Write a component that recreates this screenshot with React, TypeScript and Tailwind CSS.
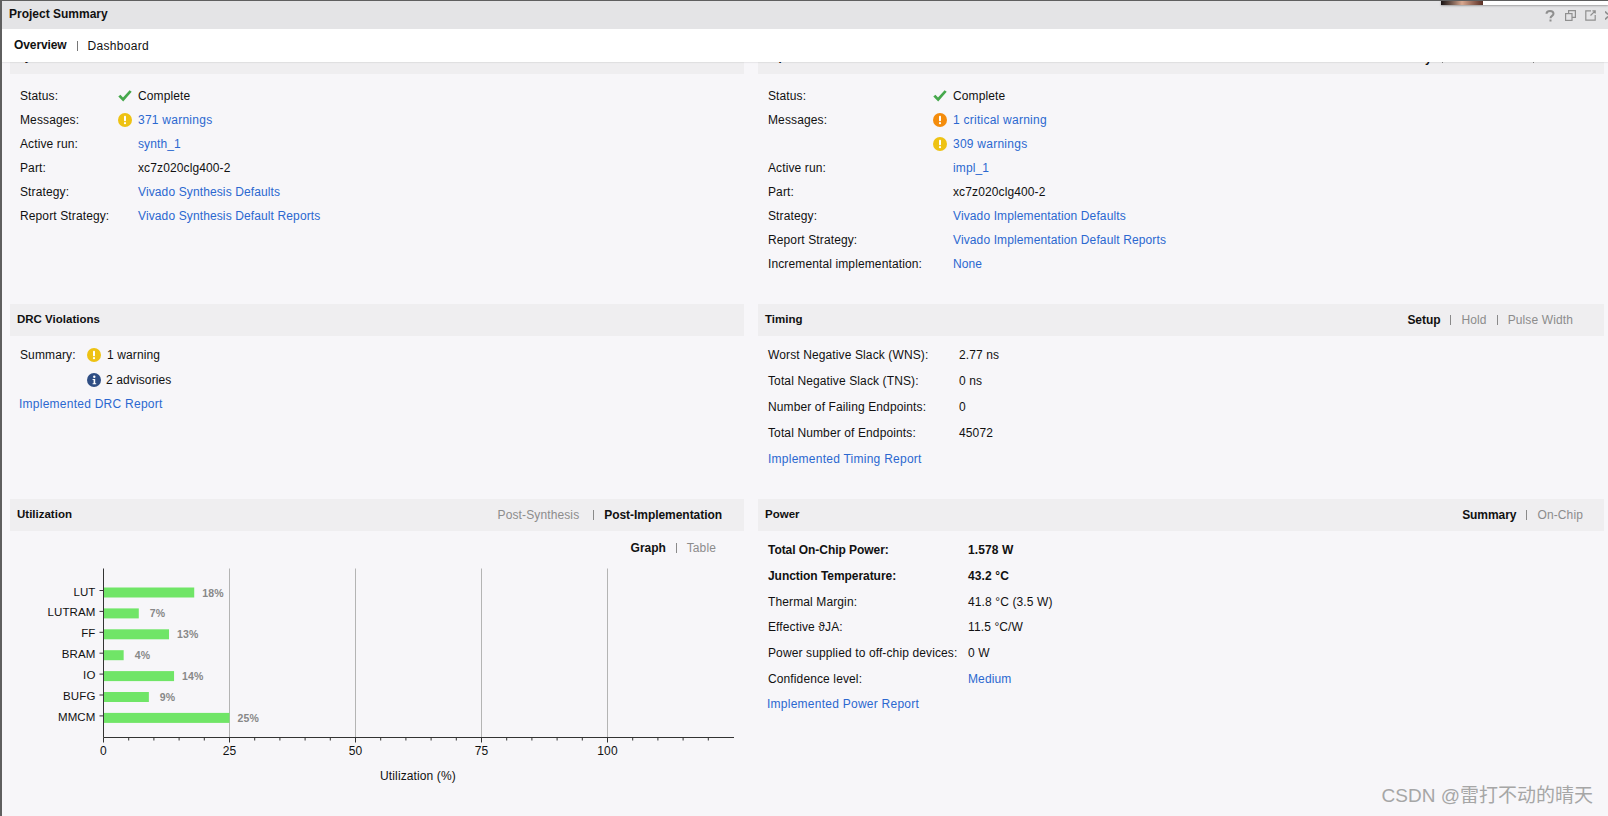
const LINK = "text-[#2b68d0]";
const LINK_WIDE = "text-[#2b68d0] tracking-[0.25px]";

const bars = [
  { name: "LUT", value: 18 },
  { name: "LUTRAM", value: 7 },
  { name: "FF", value: 13 },
  { name: "BRAM", value: 4 },
  { name: "IO", value: 14 },
  { name: "BUFG", value: 9 },
  { name: "MMCM", value: 25 },
];

const Dot = ({ color, mark }: { color: string; mark: "!" | "i" }) => (
  <svg width="14" height="14" viewBox="0 0 14 14" className="shrink-0">
    <circle cx="7" cy="7" r="7" fill={color} />
    {mark === "!" ? (
      <>
        <rect x="6" y="2.8" width="2" height="5.4" rx="0.8" fill="#fff" />
        <circle cx="7" cy="10.2" r="1.1" fill="#fff" />
      </>
    ) : (
      <>
        <circle cx="7.3" cy="3.8" r="1.2" fill="#fff" />
        <path d="M5.6 6h2.6v4.2h1v1H5.6v-1h1V7h-1z" fill="#fff" />
      </>
    )}
  </svg>
);

const Warn = () => <Dot color="#eec213" mark="!" />;
const Critical = () => <Dot color="#f48c0c" mark="!" />;
const Info = () => <Dot color="#2f4e84" mark="i" />;

const Check = () => (
  <svg width="14" height="14" viewBox="0 0 14 14" className="shrink-0">
    <path d="M0.3 7.6 L2.4 5.8 L5 8.4 L11.6 1.2 L13.7 2.8 L5.2 12.6 Z" fill="#46a84c" />
  </svg>
);

const Tabs = ({ items, active, gap = "mx-[10px]" }: { items: string[]; active: string; gap?: string }) => (
  <div className="flex items-center">
    {items.map((t, i) => (
      <div key={t} className="flex items-center">
        {i > 0 && <span className={`${gap} h-[10px] w-px bg-[#8a8a8a]`} />}
        <span className={t === active ? "font-bold tracking-[-0.05px] text-[#111]" : "text-[#8c8c8c]"}>{t}</span>
      </div>
    ))}
  </div>
);

const Header = ({ title, pr = "pr-[22px]", children }: { title: string; pr?: string; children?: React.ReactNode }) => (
  <div className={`flex h-[32px] items-center justify-between bg-[#efeef0] pl-[7px] ${pr}`}>
    <span className="text-[11.5px] font-bold tracking-[0px] text-[#111]">{title}</span>
    {children}
  </div>
);

const Row = ({
  label,
  labelW,
  iconW,
  icon,
  h,
  bold,
  children,
}: {
  label?: string;
  labelW: string;
  iconW?: string;
  icon?: React.ReactNode;
  h: string;
  bold?: boolean;
  children: React.ReactNode;
}) => (
  <div className={`flex items-center ${h} ${bold ? "font-bold" : ""}`}>
    <span className={`shrink-0 ${labelW} ${bold ? "tracking-[-0.05px]" : ""}`}>{label}</span>
    {iconW && <span className={`flex shrink-0 items-center ${iconW}`}>{icon}</span>}
    <span>{children}</span>
  </div>
);

const Chart = () => {
  const x0 = 93.5;
  const scale = 5.04;
  const top = 19.5;
  const bottom = 188.5;
  const gridLines = [25, 50, 75, 100];
  return (
    <svg width="734" height="250" viewBox="0 0 734 250" className="block">
      {gridLines.map((g) => (
        <line key={g} x1={x0 + g * scale} x2={x0 + g * scale} y1={top} y2={bottom} stroke="#b4b4b4" />
      ))}
      {bars.map((b, i) => {
        const y = 38.5 + i * 20.9;
        const w = b.value * scale;
        return (
          <g key={b.name}>
            <line x1={x0 - 4} x2={x0} y1={y + 3} y2={y + 3} stroke="#333" />
            <text x={x0 - 8} y={y + 8} textAnchor="end" fontSize="11.5" fill="#111">
              {b.name}
            </text>
            <rect x={x0} y={y} width={w} height="10" fill="#70e567" />
            <text x={x0 + w + (b.value < 10 ? 11 : 8)} y={y + 9} fontSize="10.5" fontWeight="700" fill="#888">
              {b.value}%
            </text>
          </g>
        );
      })}
      <line x1={x0} x2={x0} y1={top} y2={bottom} stroke="#333" />
      <line x1={x0} x2="724" y1={bottom} y2={bottom} stroke="#333" />
      {Array.from({ length: 25 }, (_, i) => i * 5).map((t) => {
        const x = x0 + t * scale;
        return <line key={t} x1={x} x2={x} y1={bottom} y2={bottom + (t % 25 === 0 ? 5 : 3)} stroke="#333" />;
      })}
      {[0, 25, 50, 75, 100].map((t) => (
        <text key={t} x={x0 + t * scale} y={206} textAnchor="middle" fontSize="12" fill="#111">
          {t}
        </text>
      ))}
      <text x="408" y="231" textAnchor="middle" fontSize="12" fill="#111">
        Utilization (%)
      </text>
    </svg>
  );
};

export default function App() {
  return (
    <div className="relative flex h-screen w-full flex-col overflow-hidden border-l-2 border-t border-[#5f5f5f] bg-[#f7f6f9] font-['Liberation_Sans',Arial,sans-serif] text-[12px] tracking-[0.12px] text-[#111]">
      {/* title bar */}
      <div className="z-20 flex h-[28px] shrink-0 items-center justify-between bg-[#e4e4e6] pl-[7px] pt-[1px]">
        <span className="-mt-[4px] font-bold tracking-[0px]">Project Summary</span>
        <div className="flex items-center gap-[9px] text-[#8f8f8f]">
          <svg width="11" height="12" viewBox="0 0 11 12" fill="none" stroke="#8f8f8f" strokeWidth="2">
            <path d="M1.5 3.8C1.5 2 3 1 5 1s3.5 1 3.5 2.8c0 2-3 2.2-3 4.4" />
            <path d="M5.5 9.5v2" />
          </svg>
          <svg width="11" height="11" viewBox="0 0 11 11" fill="none" stroke="#8f8f8f" strokeWidth="1.2">
            <rect x="0.6" y="3.6" width="6.4" height="6.8" />
            <path d="M3.6 3.6V0.6h6.8v6.8H7" />
          </svg>
          <svg width="11" height="11" viewBox="0 0 11 11" fill="none" stroke="#8f8f8f" strokeWidth="1.2">
            <path d="M6 0.8H0.8v9.4h9.4V5" />
            <path d="M5.5 5.5 10.2 0.8M7.4 0.8h2.8v2.8" />
          </svg>
          <svg width="3" height="9" viewBox="0 0 3 9" fill="none" stroke="#8f8f8f" strokeWidth="1.6">
            <path d="M0 0.5 3 3.5M0 8.5 3 5.5" />
          </svg>
        </div>
      </div>

      {/* tabs */}
      <div className="z-20 flex h-[33px] shrink-0 items-center bg-white pl-[12px] shadow-[0_1px_1px_rgba(0,0,0,0.06)]">
        <span className="-mt-[1px] font-bold tracking-[-0.1px]">Overview</span>
        <span className="ml-[10px] mr-[10px] h-[10px] w-px bg-[#777]" />
        <span className="pt-[1px] tracking-[0.3px]">Dashboard</span>
      </div>

      {/* panels */}
      <div className="grid flex-1 grid-cols-[734px_846px] grid-rows-[242px_195px_1fr] gap-x-[14px] overflow-hidden pl-[8px]">
        <section className="-mt-[20px]">
          <Header title="Synthesis" />
          <div className="pt-[10px] pl-[10px]">
            <Row h="h-[24px]" labelW="w-[98px]" iconW="w-[20px]" label="Status:" icon={<Check />}>Complete</Row>
            <Row h="h-[24px]" labelW="w-[98px]" iconW="w-[20px]" label="Messages:" icon={<Warn />}>
              <span className={LINK_WIDE}>371 warnings</span>
            </Row>
            <Row h="h-[24px]" labelW="w-[98px]" iconW="w-[20px]" label="Active run:">
              <span className={LINK}>synth_1</span>
            </Row>
            <Row h="h-[24px]" labelW="w-[98px]" iconW="w-[20px]" label="Part:">xc7z020clg400-2</Row>
            <Row h="h-[24px]" labelW="w-[98px]" iconW="w-[20px]" label="Strategy:">
              <span className={LINK}>Vivado Synthesis Defaults</span>
            </Row>
            <Row h="h-[24px]" labelW="w-[98px]" iconW="w-[20px]" label="Report Strategy:">
              <span className={LINK}>Vivado Synthesis Default Reports</span>
            </Row>
          </div>
        </section>

        <section className="-mt-[20px]">
          <Header title="Implementation">
            <Tabs items={["Summary", "Route Status", "Details"]} active="Summary" />
          </Header>
          <div className="pt-[10px] pl-[10px]">
            <Row h="h-[24px]" labelW="w-[165px]" iconW="w-[20px]" label="Status:" icon={<Check />}>Complete</Row>
            <Row h="h-[24px]" labelW="w-[165px]" iconW="w-[20px]" label="Messages:" icon={<Critical />}>
              <span className={LINK_WIDE}>1 critical warning</span>
            </Row>
            <Row h="h-[24px]" labelW="w-[165px]" iconW="w-[20px]" icon={<Warn />}>
              <span className={LINK_WIDE}>309 warnings</span>
            </Row>
            <Row h="h-[24px]" labelW="w-[165px]" iconW="w-[20px]" label="Active run:">
              <span className={LINK}>impl_1</span>
            </Row>
            <Row h="h-[24px]" labelW="w-[165px]" iconW="w-[20px]" label="Part:">xc7z020clg400-2</Row>
            <Row h="h-[24px]" labelW="w-[165px]" iconW="w-[20px]" label="Strategy:">
              <span className={LINK}>Vivado Implementation Defaults</span>
            </Row>
            <Row h="h-[24px]" labelW="w-[165px]" iconW="w-[20px]" label="Report Strategy:">
              <span className={LINK}>Vivado Implementation Default Reports</span>
            </Row>
            <Row h="h-[24px]" labelW="w-[165px]" iconW="w-[20px]" label="Incremental implementation:">
              <span className={LINK}>None</span>
            </Row>
          </div>
        </section>

        <section>
          <Header title="DRC Violations" />
          <div className="pt-[6px] pl-[10px]">
            <Row h="h-[25px]" labelW="w-[67px]" iconW="w-[20px]" label="Summary:" icon={<Warn />}>1 warning</Row>
            <Row h="h-[25px]" labelW="w-[67px]" iconW="w-[19px]" icon={<Info />}>2 advisories</Row>
            <div className={`-ml-[1px] flex h-[24px] items-center ${LINK_WIDE}`}>Implemented DRC Report</div>
          </div>
        </section>

        <section>
          <Header title="Timing" pr="pr-[31px]">
            <Tabs items={["Setup", "Hold", "Pulse Width"]} active="Setup" />
          </Header>
          <div className="pt-[6px] pl-[10px]">
            <Row h="h-[26px]" labelW="w-[191px]" label="Worst Negative Slack (WNS):">2.77 ns</Row>
            <Row h="h-[26px]" labelW="w-[191px]" label="Total Negative Slack (TNS):">0 ns</Row>
            <Row h="h-[26px]" labelW="w-[191px]" label="Number of Failing Endpoints:">0</Row>
            <Row h="h-[26px]" labelW="w-[191px]" label="Total Number of Endpoints:">45072</Row>
            <div className={`flex h-[26px] items-center ${LINK_WIDE}`}>Implemented Timing Report</div>
          </div>
        </section>

        <section>
          <Header title="Utilization">
            <Tabs items={["Post-Synthesis", "Post-Implementation"]} active="Post-Implementation" gap="ml-[14px] mr-[10px]" />
          </Header>
          <div className="flex h-[18px] justify-end pr-[28px] pt-[16px]">
            <Tabs items={["Graph", "Table"]} active="Graph" />
          </div>
          <Chart />
        </section>

        <section>
          <Header title="Power" pr="pr-[21px]">
            <Tabs items={["Summary", "On-Chip"]} active="Summary" />
          </Header>
          <div className="pt-[6px] pl-[10px]">
            <Row h="h-[26px]" labelW="w-[200px]" label="Total On-Chip Power:" bold>1.578 W</Row>
            <Row h="h-[26px]" labelW="w-[200px]" label="Junction Temperature:" bold>43.2 °C</Row>
            <Row h="h-[25px]" labelW="w-[200px]" label="Thermal Margin:">41.8 °C (3.5 W)</Row>
            <Row h="h-[26px]" labelW="w-[200px]" label="Effective ϑJA:">11.5 °C/W</Row>
            <Row h="h-[26px]" labelW="w-[200px]" label="Power supplied to off-chip devices:">0 W</Row>
            <Row h="h-[26px]" labelW="w-[200px]" label="Confidence level:">
              <span className={LINK}>Medium</span>
            </Row>
            <div className={`-ml-[1px] flex h-[24px] items-center ${LINK_WIDE}`}>Implemented Power Report</div>
          </div>
        </section>
      </div>

      {/* window behind, showing at the top edge */}
      <div className="absolute -top-px right-0 z-30 flex h-[5px] w-[167px] shadow-[0_1px_2px_rgba(0,0,0,0.3)]">
        <div className="w-[42px] bg-gradient-to-r from-[#1a1414] via-[#d8a890] to-[#5a3026]" />
        <div className="flex-1 bg-white" />
      </div>

      <div className="absolute bottom-[6px] right-[15px] z-30 font-['Liberation_Sans','Noto_Sans_CJK_SC',sans-serif] text-[19px] tracking-normal text-[#a6a6a6]">
        CSDN @雷打不动的晴天
      </div>
    </div>
  );
}
